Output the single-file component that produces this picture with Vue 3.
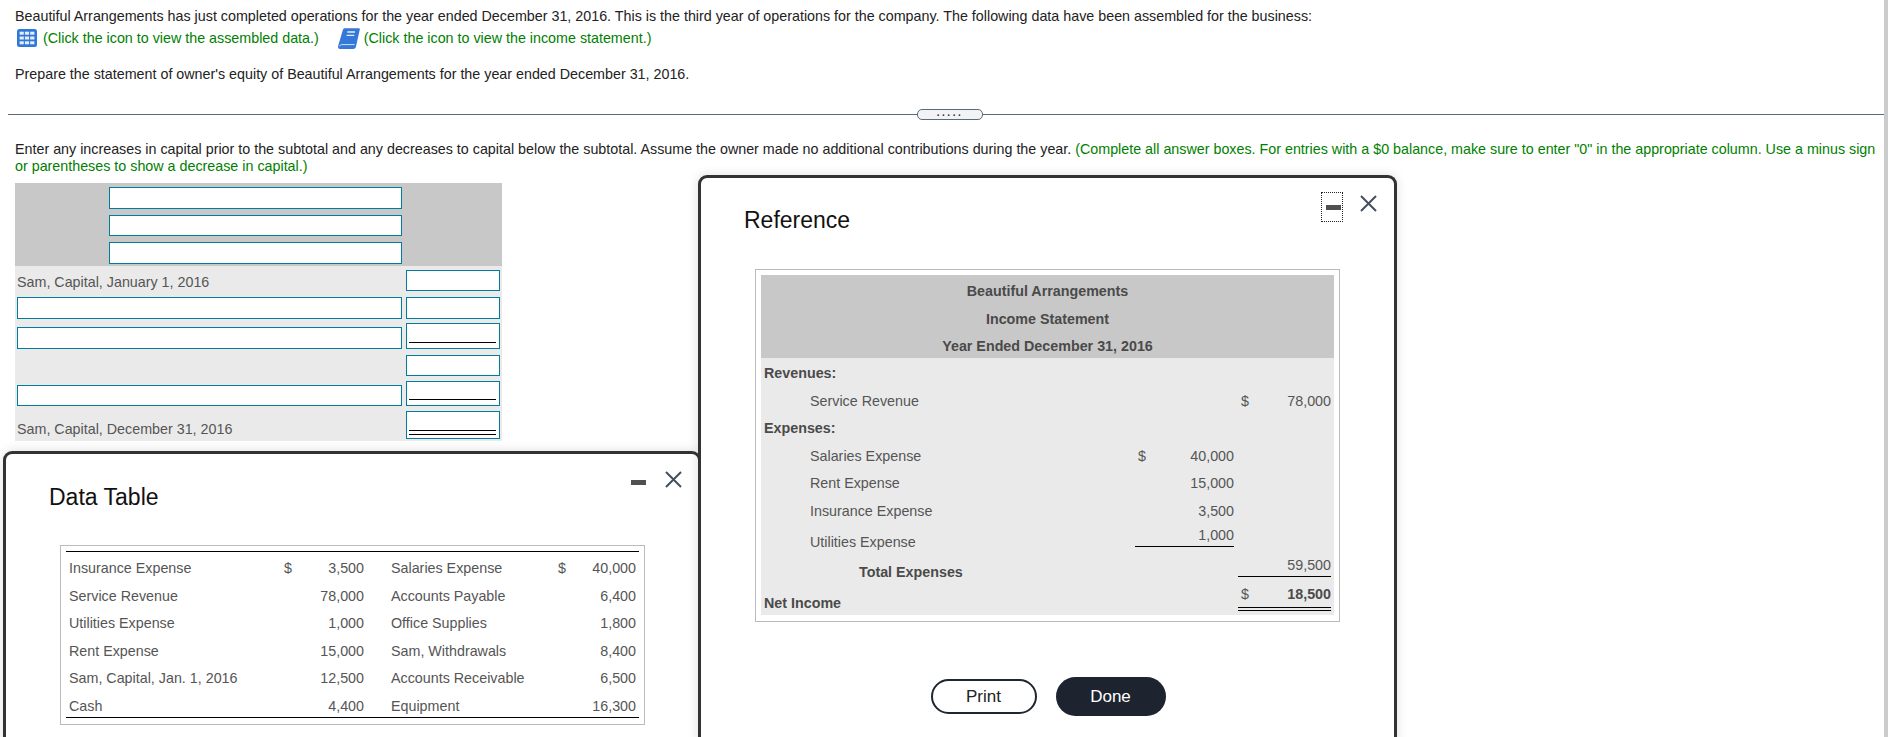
<template>
  <div class="page">
    <div class="intro">
      <p class="line">Beautiful Arrangements has just completed operations for the year ended December 31, 2016. This is the third year of operations for the company. The following data have been assembled for the business:</p>
      <div class="links">
        <svg class="grid-icon" viewBox="0 0 20 18">
          <rect width="20" height="18" rx="2.5" fill="#2f78db" />
          <g fill="#e4edfb">
            <rect v-for="c in cells" :key="c.x + '-' + c.y" :x="c.x" :y="c.y" width="4.2" height="3" />
          </g>
        </svg>
        <span class="hint">(Click the icon to view the assembled data.)</span>
        <svg class="book-icon" viewBox="0 0 22 21">
          <path d="M5 1.5 C5.4 .6 6 .2 7 .2 H21 C21.7 .2 22 .7 21.8 1.4 L18 18.5 C17.7 20 16.8 21 15.2 21 H2.6 C.8 21 -.3 19.8 .1 18 Z" fill="#3478d8" />
          <path d="M9.3 4 H17 M8.6 7.4 H16.2" stroke="#e4edfb" stroke-width="1.4" />
          <path d="M1.8 18.3 C2 17 2.8 16.6 4 16.6 H16.6" stroke="#cfe0f6" stroke-width="1" fill="none" />
        </svg>
        <span class="hint">(Click the icon to view the income statement.)</span>
      </div>
      <p class="line prepare">Prepare the statement of owner's equity of Beautiful Arrangements for the year ended December 31, 2016.</p>
    </div>

    <div class="divider">
      <span class="handle">.....</span>
    </div>

    <p class="instructions">
      Enter any increases in capital prior to the subtotal and any decreases to capital below the subtotal. Assume the owner made no additional contributions during the year.
      <span class="hint">(Complete all answer boxes. For entries with a $0 balance, make sure to enter "0" in the appropriate column. Use a minus sign or parentheses to show a decrease in capital.)</span>
    </p>

    <div class="worksheet">
      <div class="ws-head">
        <div class="box head-box"></div>
        <div class="box head-box h2"></div>
        <div class="box head-box"></div>
      </div>
      <div class="ws-body">
        <div class="ws-row r1">
          <span class="ws-label">Sam, Capital, January 1, 2016</span>
          <div class="box amt"></div>
        </div>
        <div class="ws-row r2">
          <div class="box name"></div>
          <div class="box amt"></div>
        </div>
        <div class="ws-row r3">
          <div class="box name"></div>
          <div class="box amt single"></div>
        </div>
        <div class="ws-row r4">
          <div class="box amt"></div>
        </div>
        <div class="ws-row r5">
          <div class="box name"></div>
          <div class="box amt single"></div>
        </div>
        <div class="ws-row r6">
          <span class="ws-label">Sam, Capital, December 31, 2016</span>
          <div class="box amt double"></div>
        </div>
      </div>
    </div>

    <section class="modal data">
      <div class="modal-controls">
        <span class="min-wrap"><span class="min"></span></span>
        <svg class="close" viewBox="0 0 17 17"><path d="M1 1 L16 16 M16 1 L1 16" stroke="#45505e" stroke-width="2" /></svg>
      </div>
      <h2 class="modal-title">Data Table</h2>
      <div class="frame data-frame">
        <div class="data-rows">
          <div v-for="row in dataRows" :key="row[0]" class="data-row">
            <span>{{ row[0] }}</span>
            <span>{{ row[1] }}</span>
            <span class="num">{{ row[2] }}</span>
            <span class="second">{{ row[3] }}</span>
            <span>{{ row[1] }}</span>
            <span class="num">{{ row[4] }}</span>
          </div>
        </div>
      </div>
    </section>

    <section class="modal reference">
      <div class="modal-controls">
        <span class="min-wrap focused"><span class="min"></span></span>
        <svg class="close" viewBox="0 0 17 17"><path d="M1 1 L16 16 M16 1 L1 16" stroke="#45505e" stroke-width="2" /></svg>
      </div>
      <h2 class="modal-title">Reference</h2>
      <div class="frame income">
        <div class="inc-head">
          <div>Beautiful Arrangements</div>
          <div>Income Statement</div>
          <div>Year Ended December 31, 2016</div>
        </div>
        <div class="inc-body">
          <div v-for="row in incomeRows" :key="row.label" class="inc-row" :class="row.cls">
            <span class="inc-label">{{ row.label }}</span>
            <span class="d1">{{ row.d1 }}</span>
            <span class="v1">{{ row.v1 }}</span>
            <span class="d2">{{ row.d2 }}</span>
            <span class="v2">{{ row.v2 }}</span>
          </div>
        </div>
      </div>
      <div class="buttons">
        <button class="btn print">Print</button>
        <button class="btn done">Done</button>
      </div>
    </section>
  </div>
</template>

<script setup>
const cells = []
for (const y of [2.7, 7.5, 12.3]) {
  for (const x of [2.6, 7.9, 13.2]) cells.push({ x, y })
}

const dataRows = [
  ['Insurance Expense', '$', '3,500', 'Salaries Expense', '40,000'],
  ['Service Revenue', '', '78,000', 'Accounts Payable', '6,400'],
  ['Utilities Expense', '', '1,000', 'Office Supplies', '1,800'],
  ['Rent Expense', '', '15,000', 'Sam, Withdrawals', '8,400'],
  ['Sam, Capital, Jan. 1, 2016', '', '12,500', 'Accounts Receivable', '6,500'],
  ['Cash', '', '4,400', 'Equipment', '16,300']
]

const incomeRows = [
  { label: 'Revenues:', cls: 'bold-label' },
  { label: 'Service Revenue', cls: 'indent', d2: '$', v2: '78,000' },
  { label: 'Expenses:', cls: 'bold-label' },
  { label: 'Salaries Expense', cls: 'indent', d1: '$', v1: '40,000' },
  { label: 'Rent Expense', cls: 'indent', v1: '15,000' },
  { label: 'Insurance Expense', cls: 'indent', v1: '3,500' },
  { label: 'Utilities Expense', cls: 'indent under-1', v1: '1,000' },
  { label: 'Total Expenses', cls: 'total', v2: '59,500' },
  { label: 'Net Income', cls: 'net', d2: '$', v2: '18,500' }
]
</script>

<style scoped>
.page {
  position: relative;
  height: 737px;
  overflow: hidden;
  font-family: "Liberation Sans", Arial, sans-serif;
  font-size: 14.3px;
  color: #222;
  background: #fff;
  border-right: 4px solid #ccc;
  box-sizing: border-box;
}

p {
  margin: 0;
}

.intro {
  padding: 8px 0 0 15px;
}

.line {
  line-height: 17px;
}

.links {
  display: flex;
  align-items: center;
  height: 24px;
  margin-top: 1px;
  padding-left: 2px;
}

.grid-icon {
  width: 20px;
  height: 18px;
  margin-right: 6px;
}

.book-icon {
  width: 22px;
  height: 21px;
  margin: 0 4px 0 19px;
}

.hint {
  color: #008000;
}

.prepare {
  margin-top: 16px;
}

.divider {
  display: flex;
  align-items: center;
  justify-content: center;
  height: 11px;
  margin: 26px 0 0 8px;
  position: relative;
}

.divider::before {
  content: "";
  position: absolute;
  left: 0;
  right: 0;
  top: 5px;
  height: 1px;
  background: #5b6b7a;
}

.handle {
  position: relative;
  left: 4px;
  width: 66px;
  height: 11px;
  box-sizing: border-box;
  border: 1px solid #5b6b7a;
  border-radius: 5px;
  background: #f1f3f6;
  color: #333;
  font-size: 10px;
  font-weight: 700;
  line-height: 5px;
  letter-spacing: 2.5px;
  text-align: center;
}

.instructions {
  padding: 0 8px 0 15px;
  margin-top: 21px;
  line-height: 17px;
}

.worksheet {
  width: 487px;
  margin: 8px 0 0 15px;
}

.ws-head {
  height: 83px;
  box-sizing: border-box;
  padding-top: 4px;
  background: #c8c8c8;
  display: flex;
  flex-direction: column;
  gap: 6px;
  align-items: flex-start;
}

.box {
  box-sizing: border-box;
  background: #fff;
  border: 1px solid #007c9e;
  height: 22px;
  position: relative;
}

.head-box {
  width: 293px;
  margin-left: 94px;
}

.head-box.h2 {
  height: 21px;
}

.ws-body {
  height: 175px;
  background: #eaeaea;
  color: #555;
  position: relative;
}

.ws-row {
  display: flex;
  align-items: flex-end;
  justify-content: flex-end;
  padding: 0 2px;
}

.ws-row .name {
  margin-right: auto;
  width: 385px;
}

.ws-row .amt {
  width: 94px;
  height: 21px;
}

.ws-label {
  margin-right: auto;
  align-self: center;
}

.r1 {
  height: 25px;
}

.r1 .ws-label {
  position: relative;
  top: 3px;
}

.r2 {
  height: 28px;
}

.r2 .amt {
  height: 22px;
}

.r3 {
  height: 30px;
}

.r3 .amt {
  height: 26px;
}

.r4 {
  height: 27px;
}

.r5 {
  height: 30px;
}

.r5 .name {
  height: 21px;
}

.r5 .amt {
  height: 25px;
}

.r6 {
  height: 33px;
}

.r6 .amt {
  height: 28px;
}

.r6 .ws-label {
  position: relative;
  top: 6px;
}

.single::after,
.double::after {
  content: "";
  position: absolute;
  left: 2px;
  right: 3px;
  bottom: 5px;
  height: 1px;
  background: #000;
}

.double::after {
  height: 3px;
  background: none;
  border-top: 1px solid #000;
  border-bottom: 1px solid #000;
  bottom: 3px;
}

.modal {
  position: absolute;
  box-sizing: border-box;
  background: #fff;
  border: 3px solid #333;
  border-bottom: none;
  border-radius: 9px 9px 0 0;
  box-shadow: 0 0 12px rgba(0, 0, 0, 0.12);
}

.reference {
  left: 698px;
  top: 175px;
  width: 699px;
  height: 570px;
}

.data {
  left: 3px;
  top: 451px;
  width: 698px;
  height: 300px;
}

.modal-title {
  margin: 0;
  font-size: 23px;
  font-weight: 400;
  line-height: 28px;
  color: #111;
}

.reference .modal-title {
  padding: 28px 0 0 43px;
}

.data .modal-title {
  padding: 29px 0 0 43px;
}

.modal-controls {
  position: absolute;
  display: flex;
  align-items: flex-start;
}

.reference .modal-controls {
  top: 14px;
  right: 17px;
  gap: 17px;
}

.data .modal-controls {
  top: 17px;
  right: 16px;
  gap: 19px;
}

.min-wrap {
  display: flex;
  align-items: center;
  justify-content: flex-end;
  width: 22px;
  height: 30px;
  box-sizing: border-box;
  padding-right: 1px;
}

.focused {
  border: 1px dotted #222;
}

.data .min-wrap {
  width: 16px;
  height: 5px;
  margin-top: 9px;
  padding: 0;
}

.min {
  display: block;
  width: 15px;
  height: 5px;
  background: #505050;
}

.close {
  width: 17px;
  height: 17px;
}

.reference .close {
  margin-top: 3px;
}

.frame {
  box-sizing: border-box;
  border: 1px solid #bbb;
}

.income {
  width: 585px;
  height: 353px;
  margin: 35px 0 0 54px;
  padding: 5px;
  color: #555;
}

.inc-head {
  height: 83px;
  padding-top: 3px;
  box-sizing: border-box;
  background: #c8c8c8;
  font-weight: 700;
  text-align: center;
  color: #4a4a4a;
  line-height: 27.5px;
}

.inc-body {
  background: #eaeaea;
  height: 257px;
  padding-top: 2px;
  box-sizing: border-box;
}

.inc-row {
  display: grid;
  grid-template-columns: 374px 30px 66px 37px 60px;
  height: 27.5px;
  align-items: center;
  padding-left: 3px;
  line-height: 17px;
  position: relative;
}

.d2 {
  margin-left: 7px;
}

.indent .inc-label {
  padding-left: 46px;
}

.bold-label .inc-label,
.net .inc-label,
.total .inc-label {
  font-weight: 700;
  color: #4a4a4a;
}

.v1,
.v2 {
  text-align: right;
}

.under-1 {
  height: 30px;
}

.under-1 .inc-label {
  position: relative;
  top: 2px;
}

.under-1 .v1 {
  position: relative;
  top: -5px;
}

.under-1::after {
  content: "";
  position: absolute;
  left: 374px;
  width: 99px;
  top: 21px;
  height: 1px;
  background: #000;
}

.total {
  height: 31px;
}

.total .inc-label {
  padding-left: 95px;
  position: relative;
  top: 1.5px;
}

.total .v2 {
  position: relative;
  top: -5.5px;
}

.total::after {
  content: "";
  position: absolute;
  left: 477px;
  width: 93px;
  top: 21px;
  height: 1px;
  background: #000;
}

.net .inc-label {
  position: relative;
  top: 4px;
}

.net .d2,
.net .v2 {
  position: relative;
  top: -5px;
}

.net .v2 {
  font-weight: 700;
  color: #4a4a4a;
}

.net::after {
  content: "";
  position: absolute;
  left: 477px;
  width: 93px;
  top: 21px;
  height: 4px;
  border-top: 1px solid #000;
  border-bottom: 1px solid #000;
  box-sizing: border-box;
}

.buttons {
  display: flex;
  justify-content: center;
  align-items: center;
  gap: 19px;
  margin: 55px 0 0 1px;
}

.btn {
  font-family: "Liberation Sans", Arial, sans-serif;
  font-size: 17px;
  border-radius: 20px;
  padding: 0;
  box-sizing: border-box;
}

.print {
  width: 106px;
  height: 35px;
  background: #fff;
  border: 2px solid #1f2631;
  color: #222;
}

.done {
  width: 110px;
  height: 39px;
  background: #1d2430;
  border: none;
  color: #fff;
}

.data-frame {
  width: 585px;
  height: 180px;
  margin: 34px 0 0 54px;
  padding: 5px;
  color: #555;
}

.data-rows {
  border-top: 1px solid #000;
  border-bottom: 1px solid #000;
  height: 167px;
  box-sizing: border-box;
  padding-top: 2.5px;
}

.data-row {
  display: grid;
  grid-template-columns: 215px 20px 60px 27px 167px 20px 58px;
  height: 27.5px;
  align-items: center;
  padding-left: 3px;
}

.data-row .num {
  text-align: right;
}

.data-row .second {
  grid-column: 5;
}
</style>

<style>
html,
body {
  margin: 0;
  overflow: hidden;
}
</style>
